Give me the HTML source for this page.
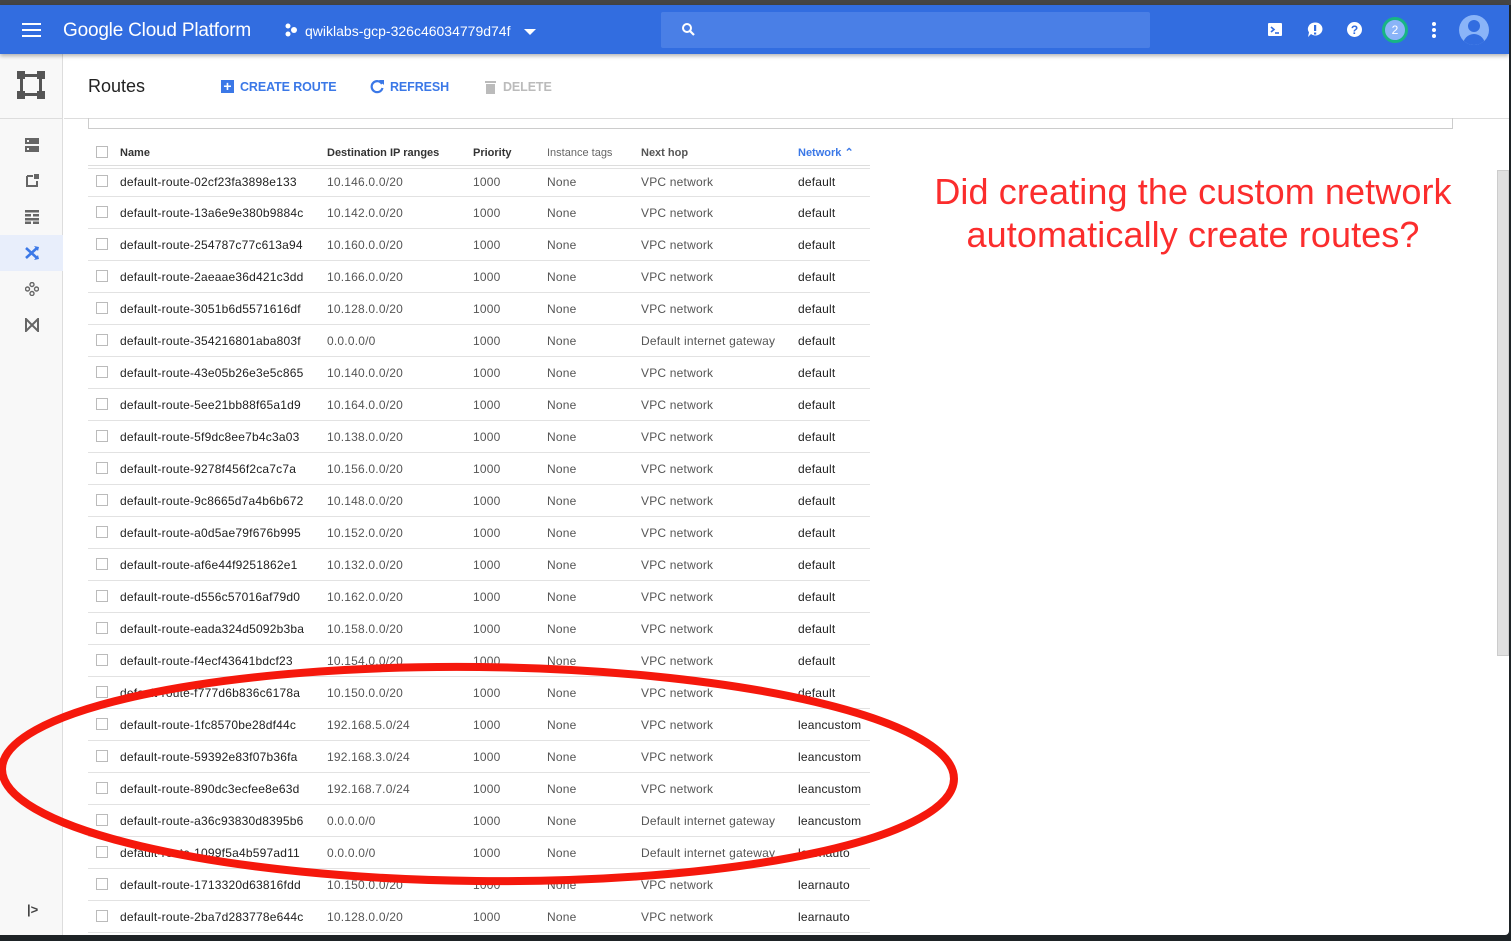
<!DOCTYPE html>
<html><head><meta charset="utf-8"><style>
*{margin:0;padding:0;box-sizing:border-box}
body{width:1511px;height:941px;overflow:hidden;background:#1e2326;font-family:"Liberation Sans",Arial,sans-serif;position:relative}
#win{position:absolute;left:0;top:0;width:1509px;height:935px;background:#fff;overflow:hidden;border-bottom-right-radius:4px}
#topdark{position:absolute;left:0;top:0;width:1511px;height:5px;background:#454545}
#bar{position:absolute;left:0;top:5px;width:1509px;height:49px;background:#326de0;box-shadow:0 2px 4px rgba(0,0,0,.3);z-index:5}
.abs{position:absolute}
#side{position:absolute;left:0;top:54px;width:63px;height:881px;background:#f8f8f8;border-right:1px solid #ddd}
.row{position:absolute;left:88px;width:782px;height:32px;border-bottom:1px solid #e2e2e2;font-size:12px;color:#212121;line-height:32px;letter-spacing:0.2px}
.row span{position:absolute;top:0}
.cb{position:absolute;left:8px;top:9px;width:12px;height:12px;border:1px solid #bbb;background:#fff}
.c1{left:32px}.c2{left:239px;color:#555}.c3{left:385px;color:#555}.c4{left:459px;color:#555}.c5{left:553px;color:#555}.c6{left:710px}
.hdr{font-weight:bold;font-size:11px;color:#333;letter-spacing:0}
.hdr span{color:#333}
.btn{font-size:12.5px;font-weight:bold;letter-spacing:-0.1px}
</style></head><body>
<div id="win">
<div id="bar">
 <div class="abs" style="left:22px;top:18px;width:19px;height:2px;background:#fff;box-shadow:0 6px 0 #fff,0 12px 0 #fff"></div>
 <div class="abs" style="left:63px;top:15px;color:#fff;font-size:19px;letter-spacing:-0.2px">Google Cloud Platform</div>
 <svg class="abs" style="left:284px;top:18px" width="14" height="14"><circle cx="4" cy="3" r="2.5" fill="#fff"/><circle cx="4" cy="11" r="2.5" fill="#fff"/><circle cx="10" cy="7" r="3" fill="#fff"/></svg>
 <div class="abs" style="left:305px;top:18px;color:#fff;font-size:14px">qwiklabs-gcp-326c46034779d74f</div>
 <div class="abs" style="left:524px;top:24px;width:0;height:0;border-left:6px solid transparent;border-right:6px solid transparent;border-top:6px solid #fff"></div>
 <div class="abs" style="left:661px;top:7px;width:489px;height:36px;background:#4a7fe6;border-radius:2px"></div>
 <svg class="abs" style="left:681px;top:17px" width="16" height="16"><circle cx="6" cy="6" r="4" stroke="#fff" stroke-width="2" fill="none"/><path d="M9 9 L13 13" stroke="#fff" stroke-width="2.2"/></svg>
 <svg class="abs" style="left:1267px;top:17px" width="16" height="16"><rect x="1" y="1" width="14" height="13" rx="1" fill="#fff"/><path d="M4 5 L7 7.5 L4 10" stroke="#326de0" stroke-width="1.6" fill="none"/><path d="M8 11 H12" stroke="#326de0" stroke-width="1.6"/></svg>
 <svg class="abs" style="left:1306px;top:16px" width="18" height="18"><path d="M9 1.5 A7 6.5 0 1 1 5 13 L2 16 L3 11.5 A7 6.5 0 0 1 9 1.5Z" fill="#fff"/><rect x="8" y="4" width="2.2" height="6" fill="#326de0"/><rect x="8" y="11.5" width="2.2" height="2" fill="#326de0"/></svg>
 <svg class="abs" style="left:1346px;top:16px" width="17" height="17"><circle cx="8.5" cy="8.5" r="7.5" fill="#fff"/><text x="8.5" y="13" text-anchor="middle" font-size="12" font-weight="bold" fill="#326de0" font-family="Liberation Sans">?</text></svg>
 <div class="abs" style="left:1382px;top:12px;width:26px;height:26px;border-radius:50%;background:#8ab4f8;border:3px solid #17b584;color:#fff;font-size:12px;text-align:center;line-height:20px">2</div>
 <div class="abs" style="left:1432px;top:17px;width:4px;height:4px;border-radius:2px;background:#fff;box-shadow:0 6px 0 #fff,0 12px 0 #fff"></div>
 <div class="abs" style="left:1459px;top:10px;width:30px;height:30px;border-radius:50%;background:#8ab4f8;overflow:hidden"><div class="abs" style="left:9px;top:5px;width:12px;height:12px;border-radius:50%;background:#326de0"></div><div class="abs" style="left:4px;top:19px;width:22px;height:16px;border-radius:11px 11px 0 0;background:#326de0"></div></div>
</div>
<div id="side">
 <svg class="abs" style="left:17px;top:17px" width="30" height="30"><rect x="0" y="0" width="8" height="8" fill="#555"/><rect x="20" y="0" width="8" height="8" fill="#555"/><rect x="0" y="20" width="8" height="8" fill="#555"/><rect x="20" y="20" width="8" height="8" fill="#555"/><rect x="3" y="6" width="3" height="16" fill="#555"/><rect x="22" y="6" width="3" height="16" fill="#555"/><rect x="6" y="3" width="16" height="3" fill="#555"/><rect x="6" y="22" width="16" height="3" fill="#555"/></svg>
 <div class="abs" style="left:0;top:64px;width:63px;height:1px;background:#ddd"></div>
 <svg class="abs" style="left:25px;top:84px" width="14" height="14"><rect x="0" y="0" width="14" height="6" fill="#666"/><rect x="0" y="8" width="14" height="6" fill="#666"/><rect x="2" y="2" width="2" height="2" fill="#f8f8f8"/><rect x="2" y="10" width="2" height="2" fill="#f8f8f8"/></svg>
 <svg class="abs" style="left:26px;top:120px" width="13" height="13"><path d="M1 2 H7 M1 2 V12 H11 V7" stroke="#666" stroke-width="2" fill="none"/><rect x="8" y="0" width="5" height="5" fill="#666"/></svg>
 <svg class="abs" style="left:25px;top:156px" width="14" height="14" fill="#666"><rect x="0" y="0" width="14" height="2.5"/><rect x="0" y="4" width="6" height="2.5"/><rect x="8" y="4" width="6" height="2.5"/><rect x="0" y="8" width="14" height="2.5"/><rect x="0" y="11.5" width="6" height="2.5"/><rect x="8" y="11.5" width="6" height="2.5"/></svg>
 <div class="abs" style="left:0;top:181px;width:63px;height:36px;background:#e8eefb"></div>
 <svg class="abs" style="left:25px;top:192px" width="14" height="14"><path d="M1 2 L12 12 M1 12 L12 2" stroke="#3b78e7" stroke-width="2.6"/><path d="M9 0 L14 1 L13 5Z M9 14 L14 13 L13 9Z" fill="#3b78e7"/></svg>
 <svg class="abs" style="left:25px;top:228px" width="14" height="14"><circle cx="7" cy="2.5" r="2" fill="none" stroke="#666" stroke-width="1.4"/><circle cx="2.5" cy="7" r="2" fill="none" stroke="#666" stroke-width="1.4"/><circle cx="11.5" cy="7" r="2" fill="none" stroke="#666" stroke-width="1.4"/><circle cx="7" cy="11.5" r="2" fill="none" stroke="#666" stroke-width="1.4"/></svg>
 <svg class="abs" style="left:25px;top:264px" width="14" height="14"><path d="M1 1 L7 7 L1 13Z M13 1 L7 7 L13 13Z" fill="none" stroke="#666" stroke-width="2"/></svg>
 <div class="abs" style="left:27px;top:848px;font-size:13px;font-weight:bold;color:#444">|&gt;</div>
</div>
<div class="abs" style="left:64px;top:118px;width:1445px;height:1px;background:#ddd"></div>
<div class="abs" style="left:88px;top:76px;font-size:18px;color:#222">Routes</div>
<div class="abs" style="left:221px;top:80px;width:13px;height:13px;background:#3b78e7;color:#fff;font-size:14px;line-height:12px;text-align:center;font-weight:bold">+</div>
<div class="abs btn" style="left:240px;top:80px;color:#3b78e7">CREATE ROUTE</div>
<svg class="abs" style="left:370px;top:79px" width="15" height="15"><path d="M12 5 A5.5 5.5 0 1 0 12.5 9" stroke="#3b78e7" stroke-width="2.2" fill="none"/><path d="M9 1 L14 1 L14 6Z" fill="#3b78e7"/></svg>
<div class="abs btn" style="left:390px;top:80px;color:#3b78e7">REFRESH</div>
<svg class="abs" style="left:485px;top:80px" width="11" height="14"><rect x="0" y="1" width="11" height="2" fill="#bbb"/><rect x="1" y="4" width="9" height="10" fill="#bbb"/></svg>
<div class="abs btn" style="left:503px;top:80px;color:#bbb">DELETE</div>
<div class="abs" style="left:88px;top:118px;width:1365px;height:11px;border:1px solid #ccc;border-top:none"></div>
<div class="abs" style="left:1497px;top:170px;width:12px;height:486px;background:#e0e0e0;border:1px solid #ccc"></div>

<div class="row hdr" style="top:137px"><div class="cb"></div><span class="c1">Name</span><span class="c2" style="color:#333">Destination IP ranges</span><span class="c3" style="color:#333">Priority</span><span class="c4" style="color:#666;font-weight:normal">Instance tags</span><span class="c5" style="color:#555">Next hop</span><span class="c6" style="color:#3b78e7">Network &#8963;</span></div>
<div id="rows"></div>
<script>
var d=[["02cf23fa3898e133","10.146.0.0/20",0,"default"],["13a6e9e380b9884c","10.142.0.0/20",0,"default"],["254787c77c613a94","10.160.0.0/20",0,"default"],["2aeaae36d421c3dd","10.166.0.0/20",0,"default"],["3051b6d5571616df","10.128.0.0/20",0,"default"],["354216801aba803f","0.0.0.0/0",1,"default"],["43e05b26e3e5c865","10.140.0.0/20",0,"default"],["5ee21bb88f65a1d9","10.164.0.0/20",0,"default"],["5f9dc8ee7b4c3a03","10.138.0.0/20",0,"default"],["9278f456f2ca7c7a","10.156.0.0/20",0,"default"],["9c8665d7a4b6b672","10.148.0.0/20",0,"default"],["a0d5ae79f676b995","10.152.0.0/20",0,"default"],["af6e44f9251862e1","10.132.0.0/20",0,"default"],["d556c57016af79d0","10.162.0.0/20",0,"default"],["eada324d5092b3ba","10.158.0.0/20",0,"default"],["f4ecf43641bdcf23","10.154.0.0/20",0,"default"],["f777d6b836c6178a","10.150.0.0/20",0,"default"],["1fc8570be28df44c","192.168.5.0/24",0,"leancustom"],["59392e83f07b36fa","192.168.3.0/24",0,"leancustom"],["890dc3ecfee8e63d","192.168.7.0/24",0,"leancustom"],["a36c93830d8395b6","0.0.0.0/0",1,"leancustom"],["1099f5a4b597ad11","0.0.0.0/0",1,"learnauto"],["1713320d63816fdd","10.150.0.0/20",0,"learnauto"],["2ba7d283778e644c","10.128.0.0/20",0,"learnauto"]];
var h="";d.forEach(function(r,i){h+='<div class="row" style="top:'+(165+32*i)+'px;border-top:'+(i==0?'1px solid #ddd':'none')+'"><div class="cb"></div><span class="c1">default-route-'+r[0]+'</span><span class="c2">'+r[1]+'</span><span class="c3">1000</span><span class="c4">None</span><span class="c5">'+(r[2]?'Default internet gateway':'VPC network')+'</span><span class="c6">'+r[3]+'</span></div>'});
document.getElementById("rows").innerHTML=h;
</script>
<div class="abs" style="left:900px;top:170px;width:586px;text-align:center;color:#fb2d2d;font-size:36px;line-height:43px;letter-spacing:0.1px">Did creating the custom network<br>automatically create routes?</div>
<svg class="abs" style="left:0;top:0" width="1509" height="935"><ellipse cx="478" cy="774" rx="476" ry="107" transform="rotate(0.6 478 774)" fill="none" stroke="#f5180c" stroke-width="8"/></svg>
</div>
<div id="topdark"></div>
</body></html>
